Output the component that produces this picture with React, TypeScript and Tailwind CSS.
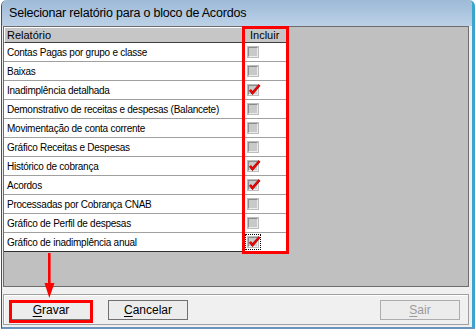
const rows: { label: string; checked: boolean }[] = [
  { label: "Contas Pagas por grupo e classe", checked: false },
  { label: "Baixas", checked: false },
  { label: "Inadimplência detalhada", checked: true },
  { label: "Demonstrativo de receitas e despesas (Balancete)", checked: false },
  { label: "Movimentação de conta corrente", checked: false },
  { label: "Gráfico Receitas e Despesas", checked: false },
  { label: "Histórico de cobrança", checked: true },
  { label: "Acordos", checked: true },
  { label: "Processadas por Cobrança CNAB", checked: false },
  { label: "Gráfico de Perfil de despesas", checked: false },
  { label: "Gráfico de inadimplência anual", checked: true },
];

function CheckBox({ checked }: { checked: boolean }) {
  return (
    <div className="relative w-[12px] h-[12px] bg-[#bdbdbd] p-[1px]">
      <div className="w-full h-full border border-t-[#8c8c8c] border-l-[#8c8c8c] border-r-[#ececec] border-b-[#ececec] bg-[#c9c9c9]" />
      {checked && (
        <svg className="absolute left-[1px] top-[-1px]" width="13" height="12" viewBox="0 0 13 12">
          <path d="M2 7 L4.5 10 L11.5 2" fill="none" stroke="#8a0000" strokeWidth="2.6" strokeLinejoin="miter" />
          <path d="M2 7 L4.5 10 L11.5 2" fill="none" stroke="#ff0000" strokeWidth="1.6" strokeLinejoin="miter" />
        </svg>
      )}
    </div>
  );
}

function Button({ label, hot, disabled }: { label: string; hot: string; disabled?: boolean }) {
  const rest = label.slice(1);
  return (
    <button
      className={`w-[80px] h-[20px] border bg-[#ececec] text-[12px] leading-none flex items-center justify-center ${
        disabled ? "border-[#adadad] text-[#9a9a9a]" : "border-[#707070] text-black"
      }`}
    >
      <span className="underline underline-offset-2">{hot}</span>
      {rest}
    </button>
  );
}

export default function App() {
  return (
    <div className="relative w-[475px] h-[332px] overflow-hidden bg-white font-['Liberation_Sans',Arial,sans-serif]">
      <div className="ml-[1px] w-[474px] h-[329px] flex flex-col rounded-t-[6px] border-l border-l-[#3f5168] border-r-[3px] border-r-[#3aa6d0] border-b-2 border-b-[#6b93bb] bg-[#f0f0f0] overflow-hidden">
        {/* title bar */}
        <div className="h-[26px] shrink-0 flex items-center pl-[7px] bg-gradient-to-b from-[#9dbad7] to-[#bcd1e7] text-[12.5px] text-black tracking-[-0.2px]">
          Selecionar relatório para o bloco de Acordos
        </div>

        {/* grid */}
        <div className="ml-[1px] w-[466px] h-[261px] shrink-0 border border-[#6d6d6d] bg-[#c0c0c0] flex flex-col">
          <div className="flex h-[16px] shrink-0">
            <div className="w-[239px] border-t border-l border-white border-r border-b border-r-[#404040] border-b-[#404040] bg-[#c6c6c6] text-[11px] pl-[2px] flex items-center">
              Relatório
            </div>
            <div className="w-[45px] border-t border-l border-white border-r border-b border-r-[#404040] border-b-[#404040] bg-[#c6c6c6] text-[11px] pl-[6px] flex items-center">
              Incluir
            </div>
          </div>
          {rows.map((r, i) => (
            <div key={r.label} className="flex h-[19px] shrink-0">
              <div
                className={`w-[239px] bg-white border-r border-r-[#a0a0a0] border-b text-[10px] tracking-[-0.25px] pl-[3px] flex items-center ${
                  i === rows.length - 1 ? "border-b-[#303030]" : "border-b-[#a0a0a0]"
                }`}
              >
                {r.label}
              </div>
              <div className="w-[45px] bg-white border-b border-b-[#a0a0a0] flex items-center pl-[2px]">
                <div className={`p-[1px] border border-dotted ${i === rows.length - 1 ? "border-black" : "border-transparent"}`}>
                  <CheckBox checked={r.checked} />
                </div>
              </div>
            </div>
          ))}
        </div>

        {/* buttons */}
        <div className="mt-[7px] ml-[1px] w-[466px] h-[31px] border border-[#a0a0a0] shadow-[inset_1px_1px_0_#ffffff] flex items-center pl-[7px] pr-[8px]">
          <Button label="Gravar" hot="G" />
          <div className="ml-[17px]">
            <Button label="Cancelar" hot="C" />
          </div>
          <div className="ml-auto">
            <Button label="Sair" hot="S" disabled />
          </div>
        </div>
      </div>

      {/* annotations */}
      <div className="absolute left-[242px] top-[26px] w-[47px] h-[228px] border-[3px] border-[#ff0000]" />
      <div className="absolute left-[9px] top-[300px] w-[84px] h-[23px] border-[3px] border-[#ff0000]" />
      <svg className="absolute left-[43px] top-[253px]" width="13" height="46" viewBox="0 0 13 46">
        <rect x="5" y="0" width="2.6" height="32" fill="#ff0000" />
        <polygon points="1.5,30 11.5,30 6.3,45" fill="#ff0000" />
      </svg>
    </div>
  );
}
